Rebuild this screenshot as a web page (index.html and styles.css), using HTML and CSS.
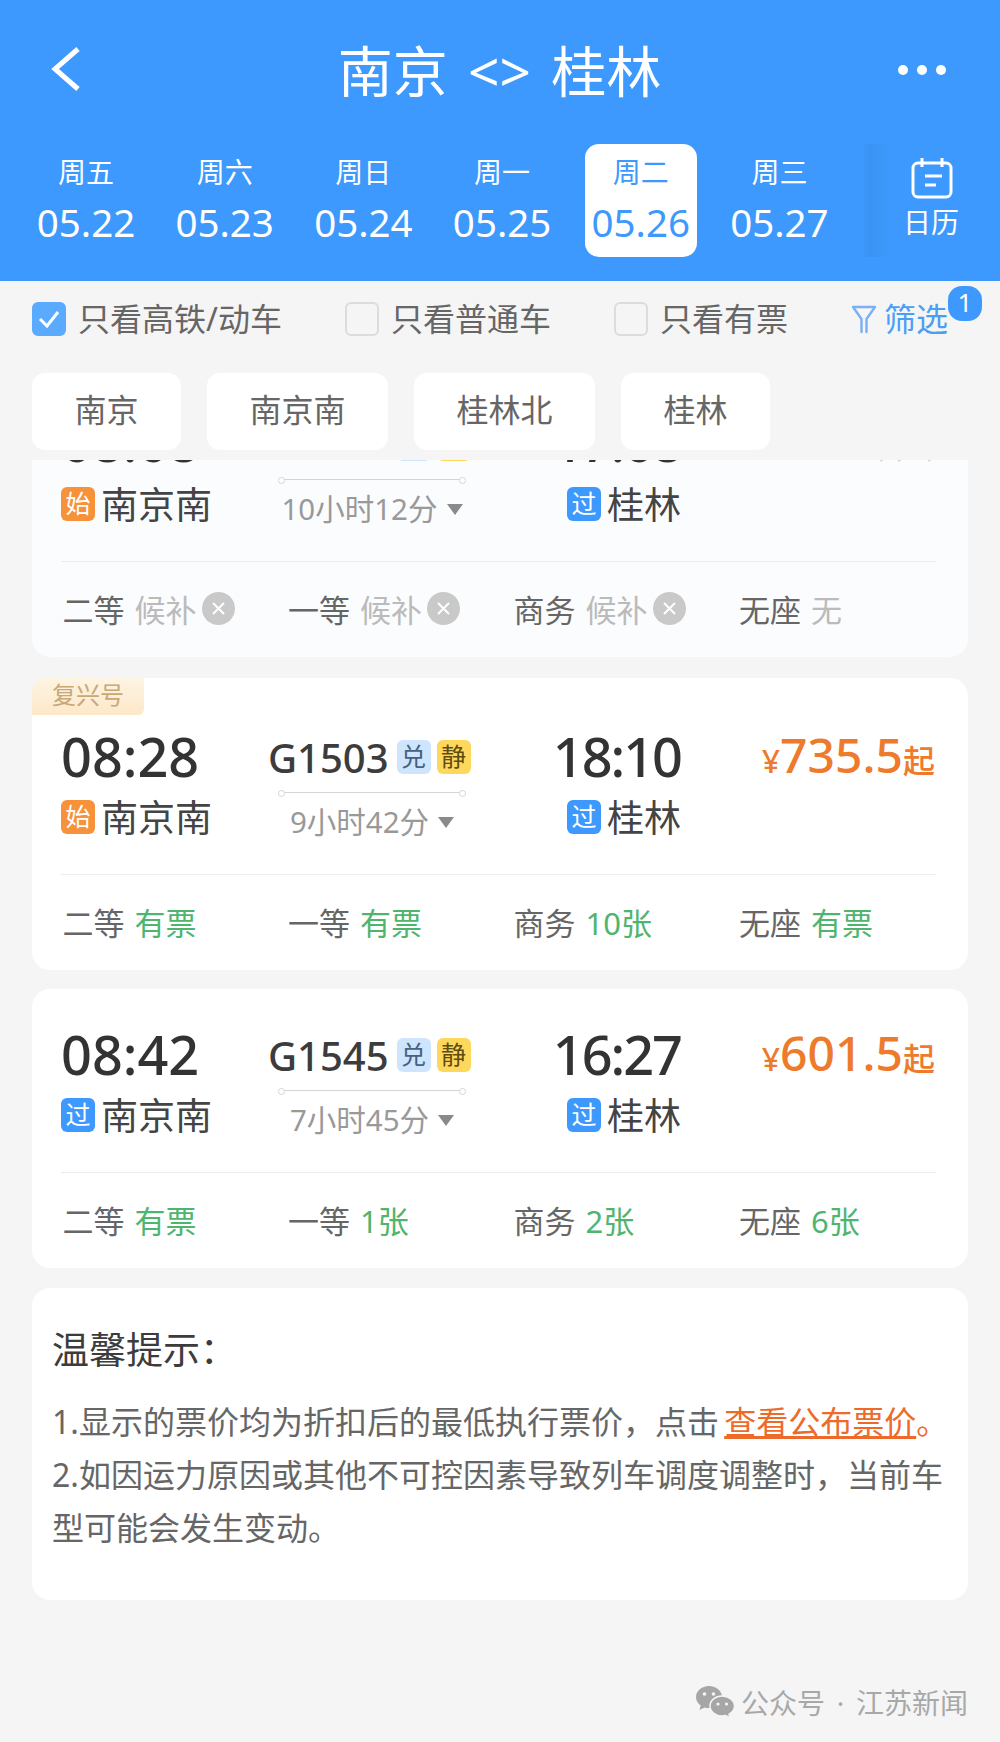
FILE: index.html
```html
<!DOCTYPE html>
<html lang="zh-CN">
<head>
    <meta charset="UTF-8">
    <meta name="viewport" content="width=device-width, initial-scale=1.0">
    <title>南京 &lt;&gt; 桂林</title>
    <link rel="stylesheet" href="styles.css">
</head>
<body>
    <header class="header">
        <div class="top-bar">
            <svg class="back-icon" width="32" height="46" viewBox="0 0 32 46"><polyline points="28,3 5,23 28,43" fill="none" stroke="#fff" stroke-width="5"/></svg>
            <h1 class="title">南京 &lt;&gt; 桂林</h1>
            <svg class="more-icon" width="50" height="12" viewBox="0 0 50 12"><circle cx="6" cy="6" r="5" fill="#fff"/><circle cx="25" cy="6" r="5" fill="#fff"/><circle cx="44" cy="6" r="5" fill="#fff"/></svg>
        </div>
        <div class="date-row">
            <div class="date-tabs">
                <div class="date-tab"><span class="week">周五</span><span class="date">05.22</span></div>
                <div class="date-tab"><span class="week">周六</span><span class="date">05.23</span></div>
                <div class="date-tab"><span class="week">周日</span><span class="date">05.24</span></div>
                <div class="date-tab"><span class="week">周一</span><span class="date">05.25</span></div>
                <div class="date-tab active"><span class="week">周二</span><span class="date">05.26</span></div>
                <div class="date-tab"><span class="week">周三</span><span class="date">05.27</span></div>
            </div>
            <div class="calendar">
                <svg width="44" height="42" viewBox="0 0 44 42"><rect x="3" y="6" width="38" height="34" rx="5" fill="none" stroke="#fff" stroke-width="3"/><path d="M12 1v9M32 1v9M15 19h17M15 28h11" fill="none" stroke="#fff" stroke-width="3"/></svg>
                <span>日历</span>
            </div>
        </div>
    </header>

    <div class="filter-row">
        <label class="check-item"><span class="checkbox checked"><svg width="24" height="20" viewBox="0 0 24 20"><polyline points="3,10 10,17 21,3" fill="none" stroke="#fff" stroke-width="3"/></svg></span>只看高铁/动车</label>
        <label class="check-item"><span class="checkbox"></span>只看普通车</label>
        <label class="check-item"><span class="checkbox"></span>只看有票</label>
        <div class="filter-btn">
            <svg width="26" height="30" viewBox="0 0 26 30"><path d="M2 3h22L15.500 15v13M2 3l8.500 12v13" fill="none" stroke="#7ab0f5" stroke-width="2.400" stroke-linejoin="round" stroke-linecap="round"/></svg>
            <span>筛选</span>
            <span class="filter-count">1</span>
        </div>
    </div>

    <div class="station-chips">
        <div class="chip">南京</div>
        <div class="chip">南京南</div>
        <div class="chip">桂林北</div>
        <div class="chip">桂林</div>
    </div>

    <div class="train-list">
        <div class="card first-card">
            <div class="train-info">
                <div class="time">08:08</div>
                <div class="train-no"><span>G3074</span><span class="mini-badge dui">兑</span><span class="mini-badge jing">静</span></div>
                <div class="time arrive">17:08</div>
                <div class="price sold-out">售罄</div>
                <div class="station"><span class="st-badge orange">始</span>南京南</div>
                <div class="duration-box">
                    <div class="line"></div>
                    <div class="duration">10小时12分<span class="caret"></span></div>
                </div>
                <div class="station arrive-st"><span class="st-badge blue">过</span>桂林</div>
            </div>
            <div class="seats">
                <div class="seat">二等<span class="gray">候补</span><span class="no-seat"><svg width="15" height="15" viewBox="0 0 15 15"><path d="M2 2l11 11M13 2L2 13" stroke="#fff" stroke-width="2"/></svg></span></div>
                <div class="seat">一等<span class="gray">候补</span><span class="no-seat"><svg width="15" height="15" viewBox="0 0 15 15"><path d="M2 2l11 11M13 2L2 13" stroke="#fff" stroke-width="2"/></svg></span></div>
                <div class="seat">商务<span class="gray">候补</span><span class="no-seat"><svg width="15" height="15" viewBox="0 0 15 15"><path d="M2 2l11 11M13 2L2 13" stroke="#fff" stroke-width="2"/></svg></span></div>
                <div class="seat">无座<span class="gray">无</span></div>
            </div>
        </div>

        <div class="card tagged">
            <div class="tag">复兴号</div>
            <div class="train-info">
                <div class="time">08:28</div>
                <div class="train-no"><span>G1503</span><span class="mini-badge dui">兑</span><span class="mini-badge jing">静</span></div>
                <div class="time arrive">18:10</div>
                <div class="price"><small>¥</small>735.5<small>起</small></div>
                <div class="station"><span class="st-badge orange">始</span>南京南</div>
                <div class="duration-box">
                    <div class="line"></div>
                    <div class="duration">9小时42分<span class="caret"></span></div>
                </div>
                <div class="station arrive-st"><span class="st-badge blue">过</span>桂林</div>
            </div>
            <div class="seats">
                <div class="seat">二等<span class="green">有票</span></div>
                <div class="seat">一等<span class="green">有票</span></div>
                <div class="seat">商务<span class="green">10张</span></div>
                <div class="seat">无座<span class="green">有票</span></div>
            </div>
        </div>

        <div class="card plain">
            <div class="train-info">
                <div class="time">08:42</div>
                <div class="train-no"><span>G1545</span><span class="mini-badge dui">兑</span><span class="mini-badge jing">静</span></div>
                <div class="time arrive">16:27</div>
                <div class="price"><small>¥</small>601.5<small>起</small></div>
                <div class="station"><span class="st-badge blue">过</span>南京南</div>
                <div class="duration-box">
                    <div class="line"></div>
                    <div class="duration">7小时45分<span class="caret"></span></div>
                </div>
                <div class="station arrive-st"><span class="st-badge blue">过</span>桂林</div>
            </div>
            <div class="seats">
                <div class="seat">二等<span class="green">有票</span></div>
                <div class="seat">一等<span class="green">1张</span></div>
                <div class="seat">商务<span class="green">2张</span></div>
                <div class="seat">无座<span class="green">6张</span></div>
            </div>
        </div>

        <div class="card tips">
            <h2>温馨提示：</h2>
            <p>1.显示的票价均为折扣后的最低执行票价，点击 <a href="#">查看公布票价</a><span class="link-end">。</span></p>
            <p>2.如因运力原因或其他不可控因素导致列车调度调整时，当前车型可能会发生变动。</p>
        </div>
    </div>

    <div class="watermark">
        <svg width="40" height="34" viewBox="0 0 40 34">
            <path d="M14 1C6.500 1 1 6 1 12c0 3.500 1.800 6.400 4.700 8.500L4.500 25l5-2.600c1.500.4 3 .6 4.500.6C21.500 23 27 18 27 12S21.500 1 14 1z" fill="#a6a6a6"/>
            <path d="M27 11c-6.600 0-12 4.400-12 10s5.400 10 12 10c1.300 0 2.500-.2 3.700-.5l4.300 2.500-1-3.900C37.300 27.300 39.500 24.300 39.500 21c0-5.600-5.900-10-12.500-10z" fill="#a6a6a6" stroke="#f5f5f5" stroke-width="1.500"/>
            <circle cx="9.500" cy="9" r="1.800" fill="#f5f5f5"/><circle cx="18.500" cy="9" r="1.800" fill="#f5f5f5"/>
            <circle cx="23" cy="19" r="1.600" fill="#f5f5f5"/><circle cx="31.500" cy="19" r="1.600" fill="#f5f5f5"/>
        </svg>
        <span>公众号 · 江苏新闻</span>
    </div>
</body>
</html>
```

FILE: styles.css
```css
* {
    box-sizing: border-box;
}
html, body {
    height: 1742px;
}
body {
    margin: 0;
    overflow: hidden;
    background-color: #f5f5f5;
    font-family: "Noto Sans", "Noto Sans CJK SC", sans-serif;
    color: #666;
}

/* header */
.header {
    height: 281px;
    background-color: #3d99fd;
    color: #fff;
}
.top-bar {
    height: 144px;
    display: flex;
    align-items: center;
    justify-content: space-between;
    padding: 0 53px 0 50px;
}
.back-icon {
    margin-top: -6px;
}
.more-icon {
    margin-top: -4px;
}
.title {
    margin: -4px 0 0 20px;
    font-size: 55px;
    font-weight: 400;
    word-spacing: 6px;
    line-height: 1;
}
.date-row {
    display: flex;
    height: 113px;
}
.date-tabs {
    display: flex;
    gap: 26.700px;
    padding-left: 30px;
    flex: 1;
}
.date-tab {
    width: 112px;
    height: 113px;
    border-radius: 14px;
    display: flex;
    flex-direction: column;
    align-items: center;
    padding-top: 8px;
}
.date-tab.active {
    background-color: #fff;
    color: #3d99fd;
}
.week {
    font-size: 28px;
    line-height: 40px;
}
.date {
    font-size: 38.500px;
    line-height: 46px;
    margin-top: 7px;
}
.calendar {
    width: 138px;
    display: flex;
    flex-direction: column;
    align-items: center;
    padding-top: 13px;
    font-size: 28px;
    line-height: 40px;
    background: linear-gradient(to left, #3d99fd 110px, #3a93f3 130px, #3d99fd);
}
.calendar svg {
    display: block;
    margin-left: 2px;
    margin-bottom: 3px;
}

/* filter row */
.filter-row {
    height: 76px;
    display: flex;
    align-items: center;
    gap: 63px;
    padding: 0 54px 4px 32px;
    font-size: 32px;
    white-space: nowrap;
}
.check-item {
    display: flex;
    align-items: center;
    gap: 12px;
}
.checkbox {
    width: 34px;
    height: 34px;
    margin-top: 4px;
    border: 2px solid #dcdcdc;
    border-radius: 6px;
    display: flex;
    align-items: center;
    justify-content: center;
}
.checkbox.checked {
    background-color: #5aabff;
    border-color: #5aabff;
}
.filter-btn {
    margin-left: auto;
    position: relative;
    display: flex;
    align-items: center;
    gap: 7px;
    color: #4a9ff5;
}
.filter-btn svg {
    margin-top: 4px;
}
.filter-count {
    position: absolute;
    left: 97px;
    top: -8px;
    width: 34px;
    height: 35px;
    border-radius: 14px;
    background-color: #3d99fd;
    color: #fff;
    font-size: 26px;
    line-height: 33px;
    text-align: center;
}

/* station chips */
.station-chips {
    display: flex;
    gap: 26px;
    padding: 16px 32px 0;
}
.chip {
    height: 77px;
    padding: 0 42.500px;
    background-color: #fff;
    border-radius: 13px;
    font-size: 32px;
    line-height: 74px;
}

/* train list */
.train-list {
    margin-top: 10px;
    height: 1150px;
    overflow: hidden;
    padding: 0 32px;
}
.card {
    background-color: #fff;
    border-radius: 18px;
    padding: 36px 32px 0 29px;
    margin-bottom: 20px;
    position: relative;
}
.first-card {
    margin-top: -95px;
    margin-bottom: 21px;
    padding-top: 49px;
    background-color: #fbfcfe;
}
.first-card .time {
    line-height: 55px;
}
.tagged {
    padding-top: 49px;
    margin-bottom: 19px;
}
.tag {
    position: absolute;
    left: 0;
    top: 0;
    width: 112px;
    height: 37px;
    border-radius: 14px 0 6px 0;
    background: linear-gradient(#fdf4e3, #fde8c9);
    color: #c9a877;
    font-size: 24px;
    line-height: 34px;
    text-align: center;
}
.train-info {
    display: grid;
    grid-template-columns: 200px 220px 200px 1fr;
    grid-template-rows: 60px 87px;
    border-bottom: 1px solid #ececec;
    height: 148px;
}
.time {
    font-size: 54px;
    font-weight: 500;
    line-height: 58px;
    color: #333;
}
.arrive {
    text-align: right;
    letter-spacing: -2px;
}
.train-no {
    display: flex;
    align-items: center;
    padding-left: 7px;
    font-size: 40px;
    font-weight: 500;
    color: #3c3c3c;
}
.mini-badge {
    width: 34px;
    height: 34px;
    margin-left: 6px;
    border-radius: 6px;
    font-size: 25px;
    font-weight: 400;
    line-height: 32px;
    text-align: center;
}
.train-no span:first-child {
    margin-right: 2px;
}
.dui {
    background-color: #cfe4fd;
    color: #45627f;
}
.jing {
    background-color: #fdd85d;
    color: #5e4c10;
}
.price {
    text-align: right;
    padding-right: 1px;
    font-size: 48px;
    font-weight: 500;
    line-height: 56px;
    color: #ee7a2b;
}
.price small {
    font-size: 32px;
}
.sold-out {
    font-size: 30px;
    font-weight: 400;
    line-height: 60px;
    color: #ccc;
    padding-top: 3px;
}
.station {
    display: flex;
    align-items: flex-start;
    gap: 6px;
    font-size: 37px;
    line-height: 62px;
    color: #444;
}
.arrive-st {
    justify-content: flex-end;
}
.st-badge {
    width: 34px;
    height: 34px;
    margin-top: 13px;
    border-radius: 6px;
    color: #fff;
    font-size: 25px;
    line-height: 32px;
    text-align: center;
}
.orange {
    background-color: #f7923a;
}
.blue {
    background-color: #3d99fd;
}
.duration-box {
    padding: 5px 0 0 19px;
}
.line {
    width: 184px;
    height: 1px;
    background-color: #d5d5d5;
    position: relative;
}
.line::before, .line::after {
    content: "";
    position: absolute;
    top: -2px;
    width: 5px;
    height: 5px;
    border: 1px solid #d5d5d5;
    border-radius: 50%;
    background-color: #fff;
}
.line::before {
    left: -2px;
}
.line::after {
    right: -2px;
}
.duration {
    display: flex;
    align-items: center;
    justify-content: center;
    width: 184px;
    margin-top: 7px;
    font-size: 29.500px;
    line-height: 44px;
    color: #999;
}
.caret {
    margin-left: 9px;
    border-left: 8px solid transparent;
    border-right: 8px solid transparent;
    border-top: 11px solid #8a8a8a;
}
.seats {
    height: 95px;
    display: grid;
    grid-template-columns: repeat(4, 225.500px);
    align-items: center;
    padding: 0 0 2px 1.500px;
    font-size: 31px;
}
.seat {
    display: flex;
    align-items: center;
}
.seat span:first-of-type {
    margin-left: 10px;
}
.green {
    color: #4fb56e;
}
.gray {
    color: #bbb;
}
.no-seat {
    width: 33px;
    height: 33px;
    margin-left: 5px;
    border-radius: 50%;
    background-color: #c9c9c9;
    display: flex;
    align-items: center;
    justify-content: center;
}

/* tips */
.tips {
    height: 312px;
    padding: 37px 10px 0 20px;
    margin-bottom: 0;
}
.tips h2 {
    margin: 0 0 20px;
    font-size: 37px;
    font-weight: 400;
    line-height: 50px;
    color: #3c3c3c;
}
.tips p {
    margin: 0;
    font-size: 32px;
    line-height: 53px;
    word-spacing: -3px;
}
.tips a {
    color: #ee6a2a;
}
.link-end {
    color: #ee6a2a;
}

/* watermark */
.watermark {
    display: flex;
    align-items: center;
    justify-content: flex-end;
    gap: 6px;
    padding: 0 32px;
    margin-top: 72px;
    font-size: 28px;
    word-spacing: 4.500px;
    color: #a8a8a8;
}
```
